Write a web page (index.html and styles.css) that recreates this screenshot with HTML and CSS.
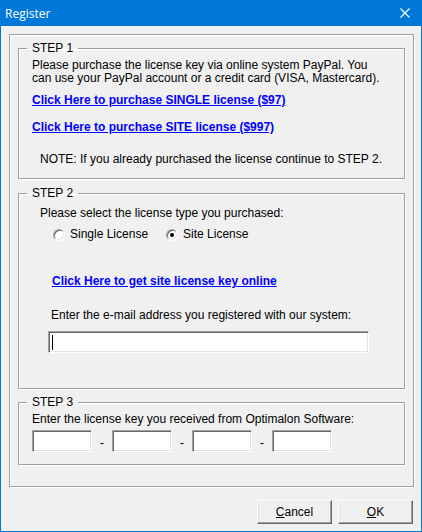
FILE: index.html
```html
<!DOCTYPE html>
<html lang="en">
<head>
    <meta charset="UTF-8">
    <title>Register</title>
    <link rel="stylesheet" href="styles.css">
</head>
<body>
    <div class="window">
        <div class="titlebar">
            <span class="title">Register</span>
            <svg class="close" width="10" height="10" viewBox="0 0 10 10">
                <path d="M0.5 0.5 L9.5 9.5 M9.5 0.5 L0.5 9.5" stroke="#fff" stroke-width="1.1" fill="none"/>
            </svg>
        </div>

        <div class="client">
            <div class="frame">
                <fieldset class="group step1">
                    <legend>STEP 1</legend>
                    <p class="intro">Please purchase the license key via online system PayPal. You<br>can use your PayPal account or a credit card (VISA, Mastercard).</p>
                    <a class="link buy-single" href="#">Click Here to purchase SINGLE license ($97)</a>
                    <a class="link buy-site" href="#">Click Here to purchase SITE license ($997)</a>
                    <p class="note">NOTE: If you already purchased the license continue to STEP 2.</p>
                </fieldset>

                <fieldset class="group step2">
                    <legend>STEP 2</legend>
                    <p class="select-label">Please select the license type you purchased:</p>
                    <div class="radios">
                        <label class="radio radio-single"><span class="dot"></span>Single License</label>
                        <label class="radio radio-site checked"><span class="dot"></span>Site License</label>
                    </div>
                    <a class="link site-key" href="#">Click Here to get site license key online</a>
                    <p class="email-label">Enter the e-mail address you registered with our system:</p>
                    <div class="field email-field"><span class="caret"></span></div>
                </fieldset>

                <fieldset class="group step3">
                    <legend>STEP 3</legend>
                    <p class="key-label">Enter the license key you received from Optimalon Software:</p>
                    <div class="key-row">
                        <div class="field key"></div>
                        <span class="dash">-</span>
                        <div class="field key"></div>
                        <span class="dash">-</span>
                        <div class="field key"></div>
                        <span class="dash">-</span>
                        <div class="field key"></div>
                    </div>
                </fieldset>
            </div>

            <div class="buttons">
                <button class="btn"><u>C</u>ancel</button>
                <button class="btn"><u>O</u>K</button>
            </div>
        </div>
    </div>
</body>
</html>
```

FILE: styles.css
```css
:root {
    --title-blue: #0078d7;
    --face: #f0f0f0;
    --etch-dark: #a0a0a0;
    --shadow-dark: #696969;
    --light: #e3e3e3;
    --link: #0000ff;
}

* {
    box-sizing: border-box;
}

body {
    margin: 0;
    background: #ffffff;
    font-family: "Liberation Sans", Arial, sans-serif;
    font-size: 12px;
    line-height: 13px;
    color: #000;
}

.window {
    width: 422px;
    height: 532px;
    display: flex;
    flex-direction: column;
}

/* Title bar */
.titlebar {
    height: 26px;
    flex: none;
    background: var(--title-blue);
    color: #fff;
    display: flex;
    align-items: center;
    justify-content: space-between;
    padding: 0 12px 0 5px;
}

.title {
    font-family: "Open Sans", "Noto Sans", sans-serif;
    font-size: 12px;
}

.close {
    display: block;
}

.client {
    flex: 1;
    background: var(--face);
    border: 1px solid var(--title-blue);
    border-top: 0;
    padding: 8px 0 0 8px;
}

/* Etched group boxes */
.frame {
    width: 405px;
    height: 453px;
    border: 1px solid var(--etch-dark);
    box-shadow: 1px 1px 0 #fff, inset 1px 1px 0 #fff;
    padding: 6px 0 0 8px;
}

.group {
    width: 387px;
    margin: 0;
    padding: 0 0 12px 8px;
    border: 1px solid var(--etch-dark);
    box-shadow: 1px 1px 0 #fff, inset 1px 1px 0 #fff;
}

.group legend {
    padding: 0 5px;
    line-height: 15px;
}

.step2 {
    margin-top: 7px;
    padding-bottom: 35px;
}

.step3 {
    margin-top: 6px;
}

.group p {
    margin: 0;
}

.intro {
    margin: 3px 0 0 5px !important;
}

.link {
    display: block;
    width: max-content;
    color: var(--link);
    font-weight: bold;
    text-decoration: underline;
}

.buy-single {
    margin: 9px 0 0 5px;
}

.buy-site {
    margin: 14px 0 0 5px;
}

.note {
    margin: 19px 0 0 13px !important;
}

.select-label {
    margin: 6px 0 0 13px !important;
}

.radios {
    display: flex;
    margin: 8px 0 0 26px;
    height: 13px;
    align-items: center;
}

.radio {
    display: flex;
    align-items: center;
}

.radio-site {
    margin-left: 18px;
}

.radio .dot {
    width: 12px;
    height: 12px;
    border-radius: 50%;
    margin-right: 5px;
    background: #fff;
    border: 1px solid;
    border-color: var(--etch-dark) #fff #fff var(--etch-dark);
    box-shadow: inset 1px 1px 0 var(--shadow-dark), inset -1px -1px 0 var(--light);
    display: flex;
    align-items: center;
    justify-content: center;
}

.radio.checked .dot::after {
    content: "";
    width: 4px;
    height: 4px;
    border-radius: 50%;
    background: #000;
}

.site-key {
    margin: 34px 0 0 25px;
}

.email-label {
    margin: 21px 0 0 24px !important;
}

/* Sunken edit fields */
.field {
    background: #fff;
    border: 1px solid;
    border-color: var(--etch-dark) #fff #fff var(--etch-dark);
    box-shadow: inset 1px 1px 0 var(--shadow-dark), inset -1px -1px 0 var(--light);
    height: 22px;
}

.email-field {
    width: 321px;
    margin: 9px 0 0 21px;
    padding: 3px 0 0 3px;
}

.caret {
    display: block;
    width: 1px;
    height: 15px;
    background: #000;
}

.key-label {
    margin: 3px 0 0 5px !important;
}

.key-row {
    display: flex;
    align-items: center;
    margin: 4px 0 0 5px;
}

.key {
    width: 60px;
}

.dash {
    width: 20px;
    padding-top: 4px;
    text-align: center;
}

/* Dialog buttons */
.buttons {
    display: flex;
    justify-content: flex-end;
    gap: 6px;
    margin: 13px 8px 0 0;
}

.btn {
    width: 75px;
    height: 24px;
    padding: 0;
    font-family: "Liberation Sans", Arial, sans-serif;
    font-size: 12px;
    color: #000;
    background: var(--face);
    border: 1px solid;
    border-color: #fff var(--shadow-dark) var(--shadow-dark) #fff;
    box-shadow: inset -1px -1px 0 var(--etch-dark), inset 1px 1px 0 var(--light);
}
```
